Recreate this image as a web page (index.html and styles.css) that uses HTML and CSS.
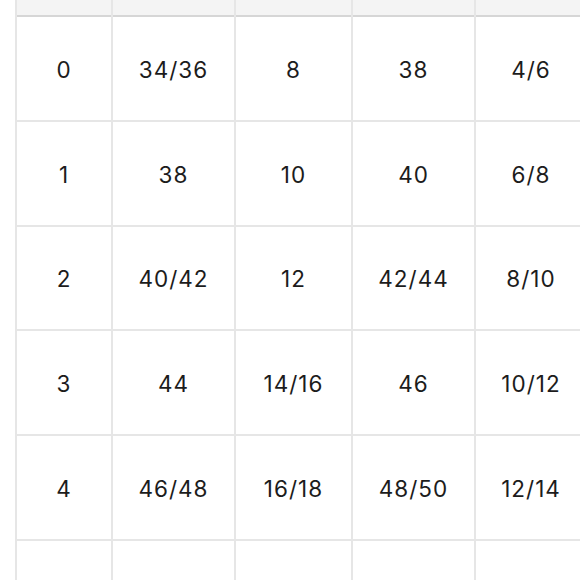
FILE: index.html
```html
<!DOCTYPE html>
<html>
<head>
<meta charset="utf-8">
<link rel="stylesheet" href="styles.css">
</head>
<body>
<div class="sheet">
  <div class="grid">
    <div class="cell head"></div><div class="cell head"></div><div class="cell head"></div><div class="cell head"></div><div class="cell head"></div>
    <div class="cell">0</div><div class="cell">34/36</div><div class="cell">8</div><div class="cell">38</div><div class="cell">4/6</div>
    <div class="cell">1</div><div class="cell">38</div><div class="cell">10</div><div class="cell">40</div><div class="cell">6/8</div>
    <div class="cell">2</div><div class="cell">40/42</div><div class="cell">12</div><div class="cell">42/44</div><div class="cell">8/10</div>
    <div class="cell">3</div><div class="cell">44</div><div class="cell">14/16</div><div class="cell">46</div><div class="cell">10/12</div>
    <div class="cell">4</div><div class="cell">46/48</div><div class="cell">16/18</div><div class="cell">48/50</div><div class="cell">12/14</div>
    <div class="cell"></div><div class="cell"></div><div class="cell"></div><div class="cell"></div><div class="cell"></div>
  </div>
</div>
</body>
</html>
```
FILE: styles.css
```css
html, body {
  margin: 0;
  padding: 0;
  background: #ffffff;
  overflow: hidden;
}
.sheet {
  width: 580px;
  height: 580px;
  overflow: hidden;
  padding-left: 15px;
  box-sizing: border-box;
}
.grid {
  display: grid;
  grid-template-columns: 94px 121px 115px 121px 110px;
  grid-template-rows: 15px repeat(6, 102.75px);
  gap: 2px;
  padding-left: 2px;
  background: #e6e6e6;
  width: max-content;
}
.cell {
  background: #ffffff;
  display: flex;
  align-items: center;
  justify-content: center;
  padding-top: 2px;
  font-family: "Inter", "Noto Sans", sans-serif;
  font-size: 22.5px;
  letter-spacing: 1px;
  color: #1c1c1c;
}
.head {
  background: #f4f4f4;
  box-shadow: 0 2px 0 #d6d6d6;
}
```
